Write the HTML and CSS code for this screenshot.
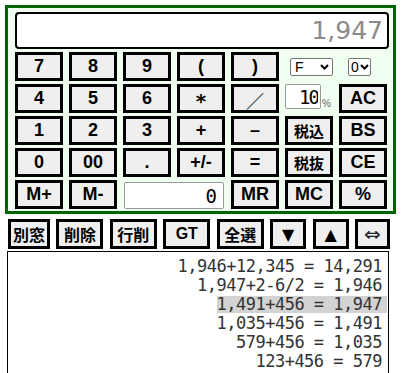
FILE: index.html
```html
<!DOCTYPE html>
<html lang="ja">
<head>
    <meta charset="UTF-8" />
    <title>電卓</title>
    <link rel="stylesheet" href="styles.css">
</head>
<body>

    <!-- Calculator -->
    <div class="calc">
        <div class="display">1,947</div>
        <div class="keys">
            <button class="key">7</button>
            <button class="key">8</button>
            <button class="key">9</button>
            <button class="key">(</button>
            <button class="key">)</button>
            <div class="key-options">
                <span class="opt-wrap opt-wide">
                    <select class="opt">
                        <option>F</option>
                    </select>
                    <svg class="chevron" width="9" height="6" viewBox="0 0 9 6"><path d="M1 1 L4.5 4.5 L8 1" fill="none" stroke="#000" stroke-width="2"/></svg>
                </span>
                <span class="opt-wrap opt-narrow">
                    <select class="opt">
                        <option>0</option>
                    </select>
                    <svg class="chevron" width="9" height="6" viewBox="0 0 9 6"><path d="M1 1 L4.5 4.5 L8 1" fill="none" stroke="#000" stroke-width="2"/></svg>
                </span>
            </div>

            <button class="key">4</button>
            <button class="key">5</button>
            <button class="key">6</button>
            <button class="key key-star">*</button>
            <button class="key key-thin">／</button>
            <div class="tax-cell">
                <input type="text" class="tax-rate" value="10" />
                <span class="tax-unit">%</span>
            </div>
            <button class="key">AC</button>

            <button class="key">1</button>
            <button class="key">2</button>
            <button class="key">3</button>
            <button class="key">+</button>
            <button class="key">–</button>
            <button class="key key-jp">税込</button>
            <button class="key">BS</button>

            <button class="key">0</button>
            <button class="key">00</button>
            <button class="key">.</button>
            <button class="key">+/-</button>
            <button class="key">=</button>
            <button class="key key-jp">税抜</button>
            <button class="key">CE</button>

            <button class="key">M+</button>
            <button class="key">M-</button>
            <div class="memory-cell">
                <input type="text" class="memory" value="0" />
            </div>
            <button class="key">MR</button>
            <button class="key">MC</button>
            <button class="key">%</button>
        </div>
    </div>

    <!-- Toolbar -->
    <div class="toolbar">
        <button class="tool tool-jp tool-first">別窓</button>
        <button class="tool tool-jp">削除</button>
        <button class="tool tool-jp">行削</button>
        <button class="tool">GT</button>
        <button class="tool tool-jp">全選</button>
        <button class="tool tool-arrow">▼</button>
        <button class="tool tool-arrow">▲</button>
        <button class="tool tool-arrow tool-swap">⇔</button>
    </div>

    <!-- History -->
    <div class="history">
        <div class="line"><span>1,946+12,345 = 14,291</span></div>
        <div class="line"><span>1,947+2-6/2 = 1,946</span></div>
        <div class="line"><span class="current">1,491+456 = 1,947</span></div>
        <div class="line"><span>1,035+456 = 1,491</span></div>
        <div class="line"><span>579+456 = 1,035</span></div>
        <div class="line"><span>123+456 = 579</span></div>
    </div>

</body>
</html>
```

FILE: styles.css
```css
body {
    margin: 5px;
    font-family: 'Liberation Sans', Arial, sans-serif;
    background-color: #fff;
    color: #000;
}

/* Calculator frame */
.calc {
    width: 375px;
    border: 3px solid #006400;
    background-color: #f0fff0;
    padding: 4px 3px 2px 7px;
}

.display {
    height: 33px;
    margin: 0 1px 3px 0;
    border: 2px solid #000;
    border-radius: 4px;
    background-color: #fff;
    color: #8a8a8a;
    font-family: 'DejaVu Sans', sans-serif;
    font-size: 25px;
    line-height: 33px;
    text-align: right;
    padding-right: 4px;
}

.keys {
    display: grid;
    grid-template-columns: repeat(7, 48px);
    grid-auto-rows: 29px;
    column-gap: 6px;
    row-gap: 3px;
}

.key {
    margin: 0;
    padding: 0;
    border: 3px solid #000;
    background-color: #efefef;
    color: #000;
    font-family: 'Liberation Sans', Arial, sans-serif;
    font-size: 18px;
    font-weight: bold;
    cursor: pointer;
}

.key-star {
    font-family: 'DejaVu Sans', sans-serif;
    font-size: 20px;
    padding-top: 2px;
}

.key-thin {
    font-weight: normal;
    font-family: 'Noto Sans CJK JP', sans-serif;
    font-size: 18px;
}

.key-jp {
    font-family: 'Noto Sans CJK JP', sans-serif;
    font-size: 15px;
}

/* Rounding options */
.key-options {
    grid-column: span 2;
    display: flex;
    align-items: center;
    gap: 15px;
    padding-left: 5px;
}

.opt-wrap {
    position: relative;
    display: block;
    height: 18px;
}

.opt {
    -webkit-appearance: none;
    appearance: none;
    width: 100%;
    height: 18px;
    margin: 0;
    padding: 0 0 0 4px;
    border: 1px solid #767676;
    border-radius: 2px;
    background-color: #fff;
    color: #000;
    font-family: 'Liberation Sans', Arial, sans-serif;
    font-size: 14px;
    line-height: 16px;
}

.chevron {
    position: absolute;
    right: 4px;
    top: 6px;
}

.opt-wide {
    width: 43px;
}

.opt-narrow {
    width: 23px;
}

.opt-narrow .opt {
    padding-left: 2px;
}

.opt-narrow .chevron {
    right: 2px;
}

/* Tax rate */
.tax-cell {
    display: flex;
    align-items: flex-end;
    padding-bottom: 4px;
}

.tax-rate {
    width: 36px;
    height: 25px;
    box-sizing: border-box;
    padding: 0 2px 0 0;
    border: 1px solid #999;
    border-radius: 2px;
    text-align: right;
    font-family: 'DejaVu Sans Mono', monospace;
    font-size: 19px;
    letter-spacing: -2px;
    color: #000;
}

.tax-unit {
    font-size: 10px;
    color: #666;
    margin-left: 1px;
}

/* Memory */
.memory-cell {
    grid-column: span 2;
    display: flex;
    align-items: flex-end;
    padding-left: 1px;
}

.memory {
    width: 100px;
    height: 27px;
    box-sizing: border-box;
    padding: 0 6px 0 0;
    border: 1px solid #999;
    border-radius: 2px;
    text-align: right;
    font-family: 'DejaVu Sans Mono', monospace;
    font-size: 19px;
    color: #000;
}

/* Toolbar */
.toolbar {
    display: flex;
    justify-content: space-between;
    width: 382px;
    margin: 5px 0 2px 3px;
}

.tool {
    width: 47px;
    height: 30px;
    margin: 0;
    padding: 0;
    border: 3px solid #000;
    background-color: #efefef;
    color: #000;
    font-family: 'Liberation Sans', Arial, sans-serif;
    font-size: 16px;
    font-weight: bold;
    cursor: pointer;
}

.tool-first {
    width: 42px;
}

.tool-jp {
    font-family: 'Noto Sans CJK JP', sans-serif;
    font-size: 16px;
}

.tool-arrow {
    width: 36px;
    font-family: 'DejaVu Sans', sans-serif;
    font-size: 16px;
    font-weight: normal;
}

.tool-swap {
    width: 35px;
    font-size: 20px;
    color: #222;
}

/* History */
.history {
    width: 380px;
    height: 140px;
    margin-left: 2px;
    border: 1px solid #000;
    padding: 4px 0 0 0;
    font-family: 'DejaVu Sans Mono', monospace;
    font-size: 17px;
    letter-spacing: -0.5px;
    color: #333;
}

.line {
    height: 19px;
    text-align: right;
    padding-right: 1px;
}

.line span {
    display: inline-block;
    height: 17px;
    line-height: 17px;
    padding-right: 5px;
}

.line .current {
    background-color: #d3d3d3;
}
```
